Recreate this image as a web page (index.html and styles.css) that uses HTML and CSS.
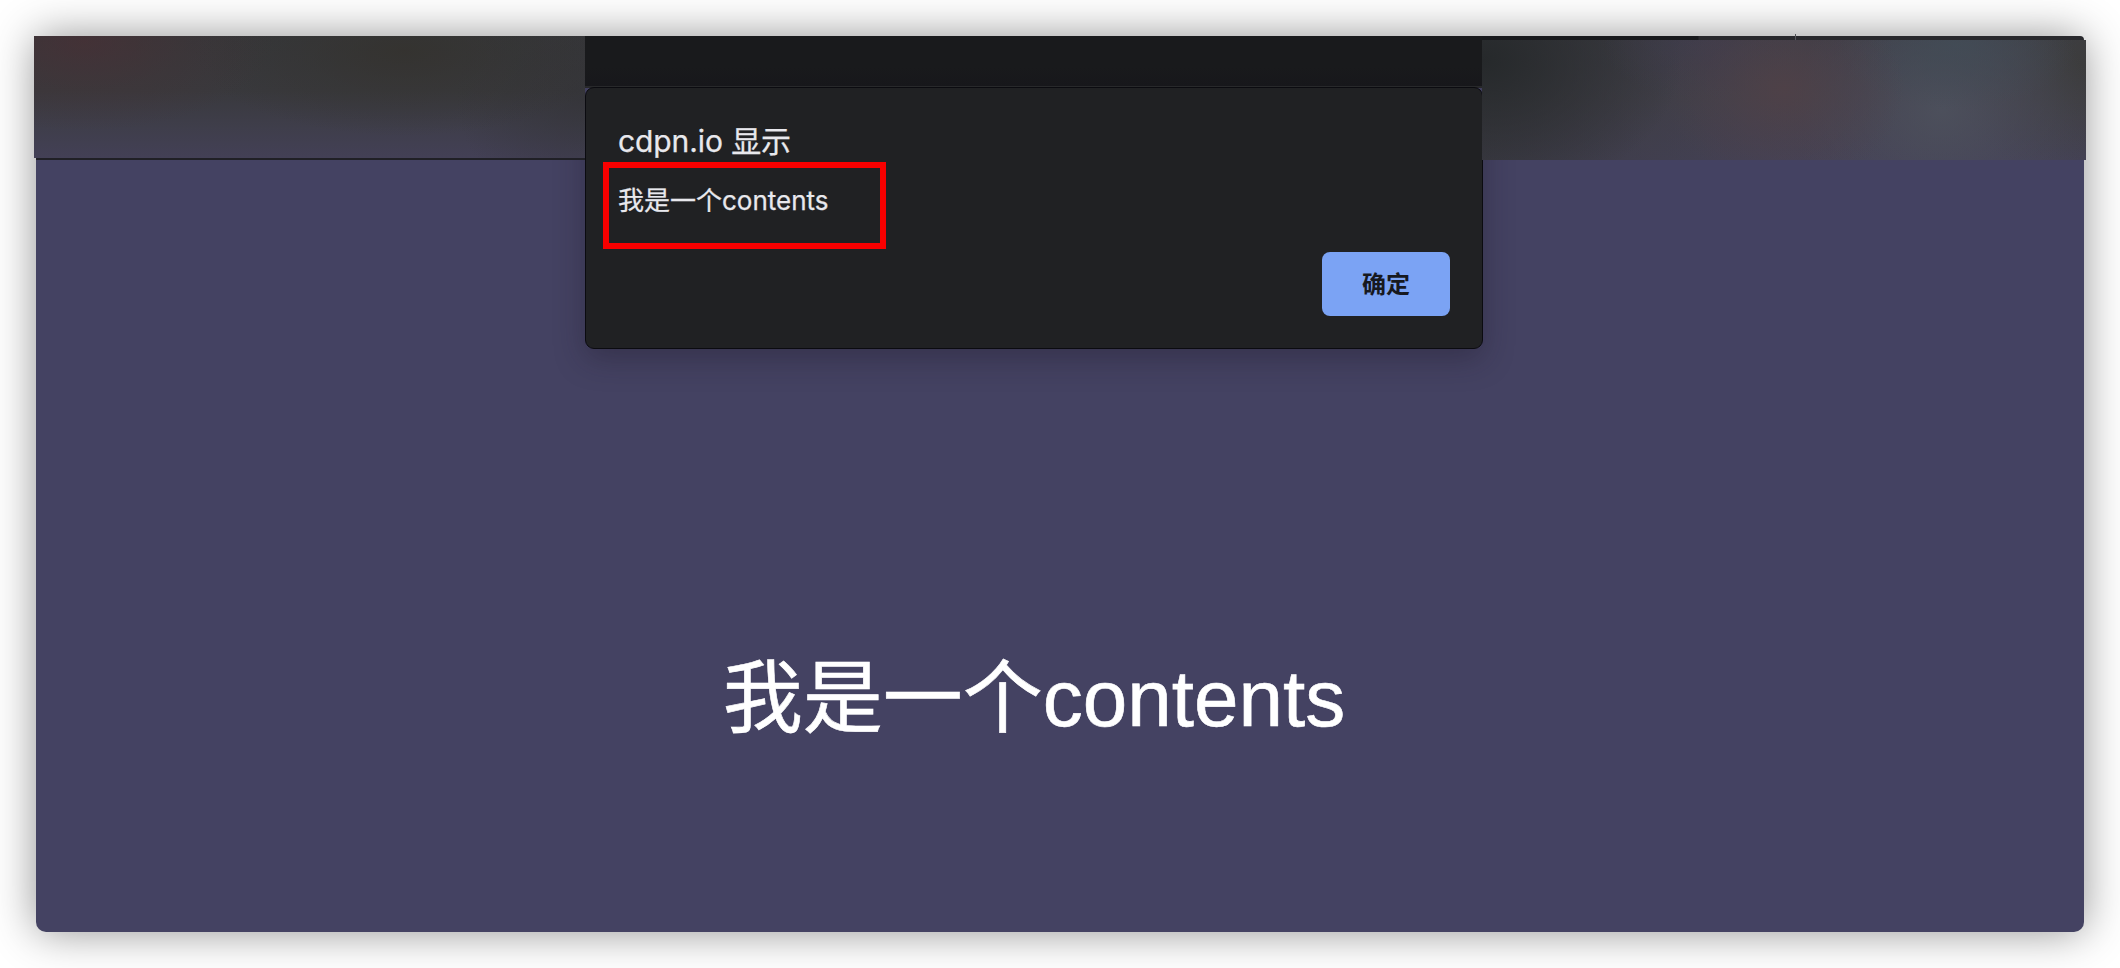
FILE: index.html
```html
<!DOCTYPE html>
<html lang="zh-CN">
<head>
<meta charset="utf-8">
<title>cdpn.io</title>
<link rel="stylesheet" href="styles.css">
</head>
<body>
<div class="window">
  <header class="chrome">
    <div class="bookmarks"><div class="strip strip-left"></div></div>
    <div class="toolbar"></div>
    <div class="tabs">
      <div class="tabs-edge"><span class="tick"></span></div>
      <div class="strip strip-right"></div>
    </div>
  </header>
  <main class="page"><h1 class="headline">我是一个contents</h1></main>
  <section class="dialog" role="dialog">
    <h2 class="dialog-title">cdpn.io 显示</h2>
    <div class="highlight"><p class="dialog-text">我是一个contents</p></div>
    <div class="actions"><button class="ok">确定</button></div>
  </section>
</div>
</body>
</html>
```
FILE: styles.css
```css
* { box-sizing: border-box; }
body { margin: 0; padding: 36px; background: #fff; height: 968px; overflow: hidden; }
.window {
  position: relative;
  width: 2048px;
  height: 896px;
  border-radius: 0 10px 10px 10px;
  background: #444262;
  box-shadow: 0 0 44px rgba(0, 0, 0, .43);
}
.chrome { display: grid; grid-template-columns: 549px 897px 602px; height: 124px; }
.bookmarks { position: relative; z-index: 1; border-bottom: 2px solid #202026; }
.strip-left {
  height: 122px;
  margin-left: -2px;
  background:
    radial-gradient(ellipse 190px 90px at 50px 5px, rgba(76, 46, 52, .6), rgba(72, 48, 52, .25) 55%, transparent),
    radial-gradient(ellipse 210px 85px at 370px 15px, rgba(52, 50, 46, .85), rgba(52, 51, 48, .4) 50%, transparent),
    radial-gradient(ellipse 130px 120px at 551px 60px, rgba(50, 50, 54, .6), transparent),
    linear-gradient(#36373a, #39393d 45%, #3f3e4b 75%, #434056);
}
.toolbar { height: 52px; background: linear-gradient(#191a1c 60%, #17171b 96%, #28292b 97%); }
.tabs { position: relative; z-index: 1; margin-right: -2px; }
.tabs-edge {
  height: 4px;
  margin-right: 2px;
  border-radius: 0 10px 0 0;
  background: linear-gradient(90deg, #18191c 216px, #29292d 217px);
}
.tick { display: block; width: 1px; height: 6px; margin-left: 313px; transform: translateY(-2px); background: #55565b; }
.strip-right {
  height: 120px;
  background:
    radial-gradient(ellipse 120px 100px at 302px 48px, rgba(80, 65, 71, .85), rgba(78, 65, 73, .45) 50%, transparent),
    radial-gradient(ellipse 120px 65px at 475px 5px, rgba(66, 76, 86, .85), transparent),
    radial-gradient(ellipse 150px 130px at 460px 70px, rgba(77, 81, 93, .9), rgba(75, 77, 91, .45) 55%, transparent),
    radial-gradient(ellipse 130px 120px at 600px 25px, rgba(60, 60, 60, .95), rgba(62, 62, 64, .5) 50%, transparent),
    radial-gradient(ellipse 100px 60px at 220px 0, rgba(64, 60, 78, .7), transparent),
    radial-gradient(ellipse 200px 140px at 0 20px, #26292b, transparent),
    linear-gradient(90deg, rgba(56, 56, 60, .7), rgba(66, 64, 76, .2) 50%, transparent),
    linear-gradient(#3d3d45, #43414c 50%, #454259);
}
.page { display: flex; justify-content: center; padding: 479px 52px 0 0; height: 772px; }
.headline {
  margin: 0;
  font: 400 80px/120px "Liberation Sans", "Noto Sans CJK SC", sans-serif;
  color: #fff;
  -webkit-text-stroke: .6px #fff;
  white-space: nowrap;
}
.dialog {
  position: absolute;
  left: 549px;
  top: 51px;
  width: 898px;
  height: 262px;
  border: 1px solid #0b0b10;
  border-radius: 9px;
  background: #202123;
  box-shadow: 0 10px 30px rgba(25, 20, 35, .34);
  clip-path: inset(0 -60px -60px -60px);
  color: #e8e8ed;
  font-family: Inter, "Noto Sans CJK SC", sans-serif;
  -webkit-text-stroke: .25px currentColor;
}
.dialog-title { margin: 33px 0 1px 32px; font-size: 30px; font-weight: 400; line-height: 40px; letter-spacing: -.1px; white-space: nowrap; }
.highlight { width: 283px; height: 87px; margin: 0 0 0 17px; padding: 15px 0 0 9px; border: 6px solid #f80000; }
.dialog-text { margin: 0; font-size: 26px; line-height: 36px; white-space: nowrap; }
.actions { display: flex; justify-content: flex-end; margin-top: 3px; padding-right: 32px; }
.ok {
  width: 128px;
  height: 64px;
  padding: 0 0 3px;
  border: 0;
  border-radius: 8px;
  background: #7ba3f4;
  color: #17191f;
  font: 700 24px/61px "Noto Sans CJK SC", sans-serif;
  -webkit-text-stroke: 0;
}
```
